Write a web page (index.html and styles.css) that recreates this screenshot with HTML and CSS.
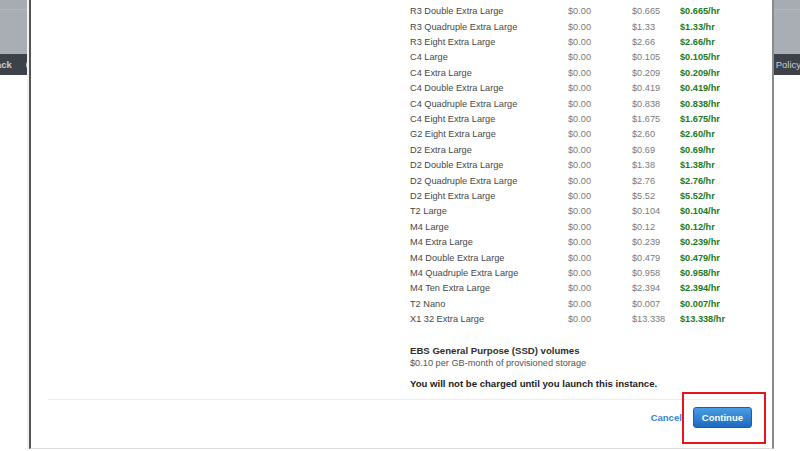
FILE: index.html
```html
<!DOCTYPE html>
<html lang="en">

<head>
  <meta charset="UTF-8" />
  <meta name="viewport" content="width=device-width, initial-scale=1.0" />
  <title>Launch instance - pricing</title>
  <link rel="stylesheet" href="styles.css">
</head>

<body>
  <div class="console">
    <div class="header"></div>
    <div class="footbar">
      <div class="footbar-left">
        <span>Feedback</span>
        <span class="globe"></span>
      </div>
      <div class="footbar-right">
        <span>Privacy Policy</span>
      </div>
    </div>
  </div>

  <div class="modal">
    <div class="body">
      <div class="prices">
        <div class="row"><span>R3 Double Extra Large</span><span class="free">$0.00</span><span class="rate">$0.665</span><b>$0.665/hr</b></div>
        <div class="row"><span>R3 Quadruple Extra Large</span><span class="free">$0.00</span><span class="rate">$1.33</span><b>$1.33/hr</b></div>
        <div class="row"><span>R3 Eight Extra Large</span><span class="free">$0.00</span><span class="rate">$2.66</span><b>$2.66/hr</b></div>
        <div class="row"><span>C4 Large</span><span class="free">$0.00</span><span class="rate">$0.105</span><b>$0.105/hr</b></div>
        <div class="row"><span>C4 Extra Large</span><span class="free">$0.00</span><span class="rate">$0.209</span><b>$0.209/hr</b></div>
        <div class="row"><span>C4 Double Extra Large</span><span class="free">$0.00</span><span class="rate">$0.419</span><b>$0.419/hr</b></div>
        <div class="row"><span>C4 Quadruple Extra Large</span><span class="free">$0.00</span><span class="rate">$0.838</span><b>$0.838/hr</b></div>
        <div class="row"><span>C4 Eight Extra Large</span><span class="free">$0.00</span><span class="rate">$1.675</span><b>$1.675/hr</b></div>
        <div class="row"><span>G2 Eight Extra Large</span><span class="free">$0.00</span><span class="rate">$2.60</span><b>$2.60/hr</b></div>
        <div class="row"><span>D2 Extra Large</span><span class="free">$0.00</span><span class="rate">$0.69</span><b>$0.69/hr</b></div>
        <div class="row"><span>D2 Double Extra Large</span><span class="free">$0.00</span><span class="rate">$1.38</span><b>$1.38/hr</b></div>
        <div class="row"><span>D2 Quadruple Extra Large</span><span class="free">$0.00</span><span class="rate">$2.76</span><b>$2.76/hr</b></div>
        <div class="row"><span>D2 Eight Extra Large</span><span class="free">$0.00</span><span class="rate">$5.52</span><b>$5.52/hr</b></div>
        <div class="row"><span>T2 Large</span><span class="free">$0.00</span><span class="rate">$0.104</span><b>$0.104/hr</b></div>
        <div class="row"><span>M4 Large</span><span class="free">$0.00</span><span class="rate">$0.12</span><b>$0.12/hr</b></div>
        <div class="row"><span>M4 Extra Large</span><span class="free">$0.00</span><span class="rate">$0.239</span><b>$0.239/hr</b></div>
        <div class="row"><span>M4 Double Extra Large</span><span class="free">$0.00</span><span class="rate">$0.479</span><b>$0.479/hr</b></div>
        <div class="row"><span>M4 Quadruple Extra Large</span><span class="free">$0.00</span><span class="rate">$0.958</span><b>$0.958/hr</b></div>
        <div class="row"><span>M4 Ten Extra Large</span><span class="free">$0.00</span><span class="rate">$2.394</span><b>$2.394/hr</b></div>
        <div class="row"><span>T2 Nano</span><span class="free">$0.00</span><span class="rate">$0.007</span><b>$0.007/hr</b></div>
        <div class="row"><span>X1 32 Extra Large</span><span class="free">$0.00</span><span class="rate">$13.338</span><b>$13.338/hr</b></div>
      </div>

      <div class="ebs">
        <div class="ebs-title">EBS General Purpose (SSD) volumes</div>
        <div class="ebs-sub">$0.10 per GB-month of provisioned storage</div>
      </div>
      <div class="notice">You will not be charged until you launch this instance.</div>
    </div>

    <div class="footer">
      <a href="javascript:;" class="cancel">Cancel</a>
      <a href="javascript:;" class="continue">Continue</a>
    </div>
  </div>

  <!-- annotation box round the button -->
  <div class="highlight"></div>
</body>

</html>
```

FILE: styles.css
```css
* {
  padding: 0;
  margin: 0;
  box-sizing: border-box;
}

body {
  width: 800px;
  height: 451px;
  overflow: hidden;
  background: #fff;
  font-family: "Liberation Sans", Arial, sans-serif;
}

/* console page behind the dialog */
.header {
  height: 54px;
  background: #a9aeb4;
  border-top: 9px solid #a7acb2;
  box-shadow: inset 0 1px 0 #b4b8bd;
}

.footbar {
  height: 21px;
  background: #3d424a;
  display: flex;
  justify-content: space-between;
  align-items: center;
  color: #c9ccd0;
  font-size: 9.5px;
  overflow: hidden;
}

.footbar-left {
  display: flex;
  align-items: center;
  gap: 14px;
  margin-left: -32px;
  font-weight: bold;
}

.globe {
  width: 8px;
  height: 8px;
  border-radius: 50%;
  border: 2px solid #c9ccd0;
}

.footbar-right {
  margin-right: -1px;
  white-space: nowrap;
}

/* dialog */
.modal {
  position: absolute;
  top: 0;
  left: 29px;
  width: 745px;
  height: 449px;
  background: #fff;
  border-left: 2px solid #555;
  border-right: 2px solid #8a8a8a;
  border-bottom: 1px solid #dcdcdc;
  box-shadow: -2px 0 0 #f1f1f1;
  display: flex;
  flex-direction: column;
}

.body {
  padding: 4.3px 0 0 379px;
  flex: 1;
}

.row {
  display: grid;
  grid-template-columns: 158px 64px 48px auto;
  height: 15.4px;
  line-height: 15.4px;
  font-size: 9.2px;
  color: #474747;
  white-space: nowrap;
}

.row .free,
.row .rate {
  color: #7a7a7a;
}

.row b {
  color: #217a21;
}

.ebs {
  margin-top: 16px;
  line-height: 13px;
}

.ebs-title {
  font-size: 9.6px;
  font-weight: bold;
  color: #2e2e2e;
}

.ebs-sub {
  font-size: 9.2px;
  color: #555;
}

.notice {
  margin-top: 7.5px;
  line-height: 14px;
  font-size: 9.6px;
  font-weight: bold;
  color: #222;
}

.footer {
  margin: 0 18px 0 17px;
  height: 49px;
  border-top: 1px solid #ececec;
  display: flex;
  justify-content: flex-end;
  align-items: flex-start;
  gap: 11px;
  padding: 7px 2px 0 0;
}

.footer a {
  text-decoration: none;
  font-size: 9.5px;
  font-weight: bold;
}

.cancel {
  color: #3a82d2;
  line-height: 21px;
}

.continue {
  display: block;
  height: 21px;
  line-height: 19px;
  padding: 0 8px;
  color: #fff;
  border: 1px solid #1a5ea8;
  border-radius: 3px;
  background: linear-gradient(#4b9ce2, #1c69c2);
}

.highlight {
  position: absolute;
  left: 682px;
  top: 392px;
  width: 84px;
  height: 52px;
  border: 2px solid #e6151c;
}
```
